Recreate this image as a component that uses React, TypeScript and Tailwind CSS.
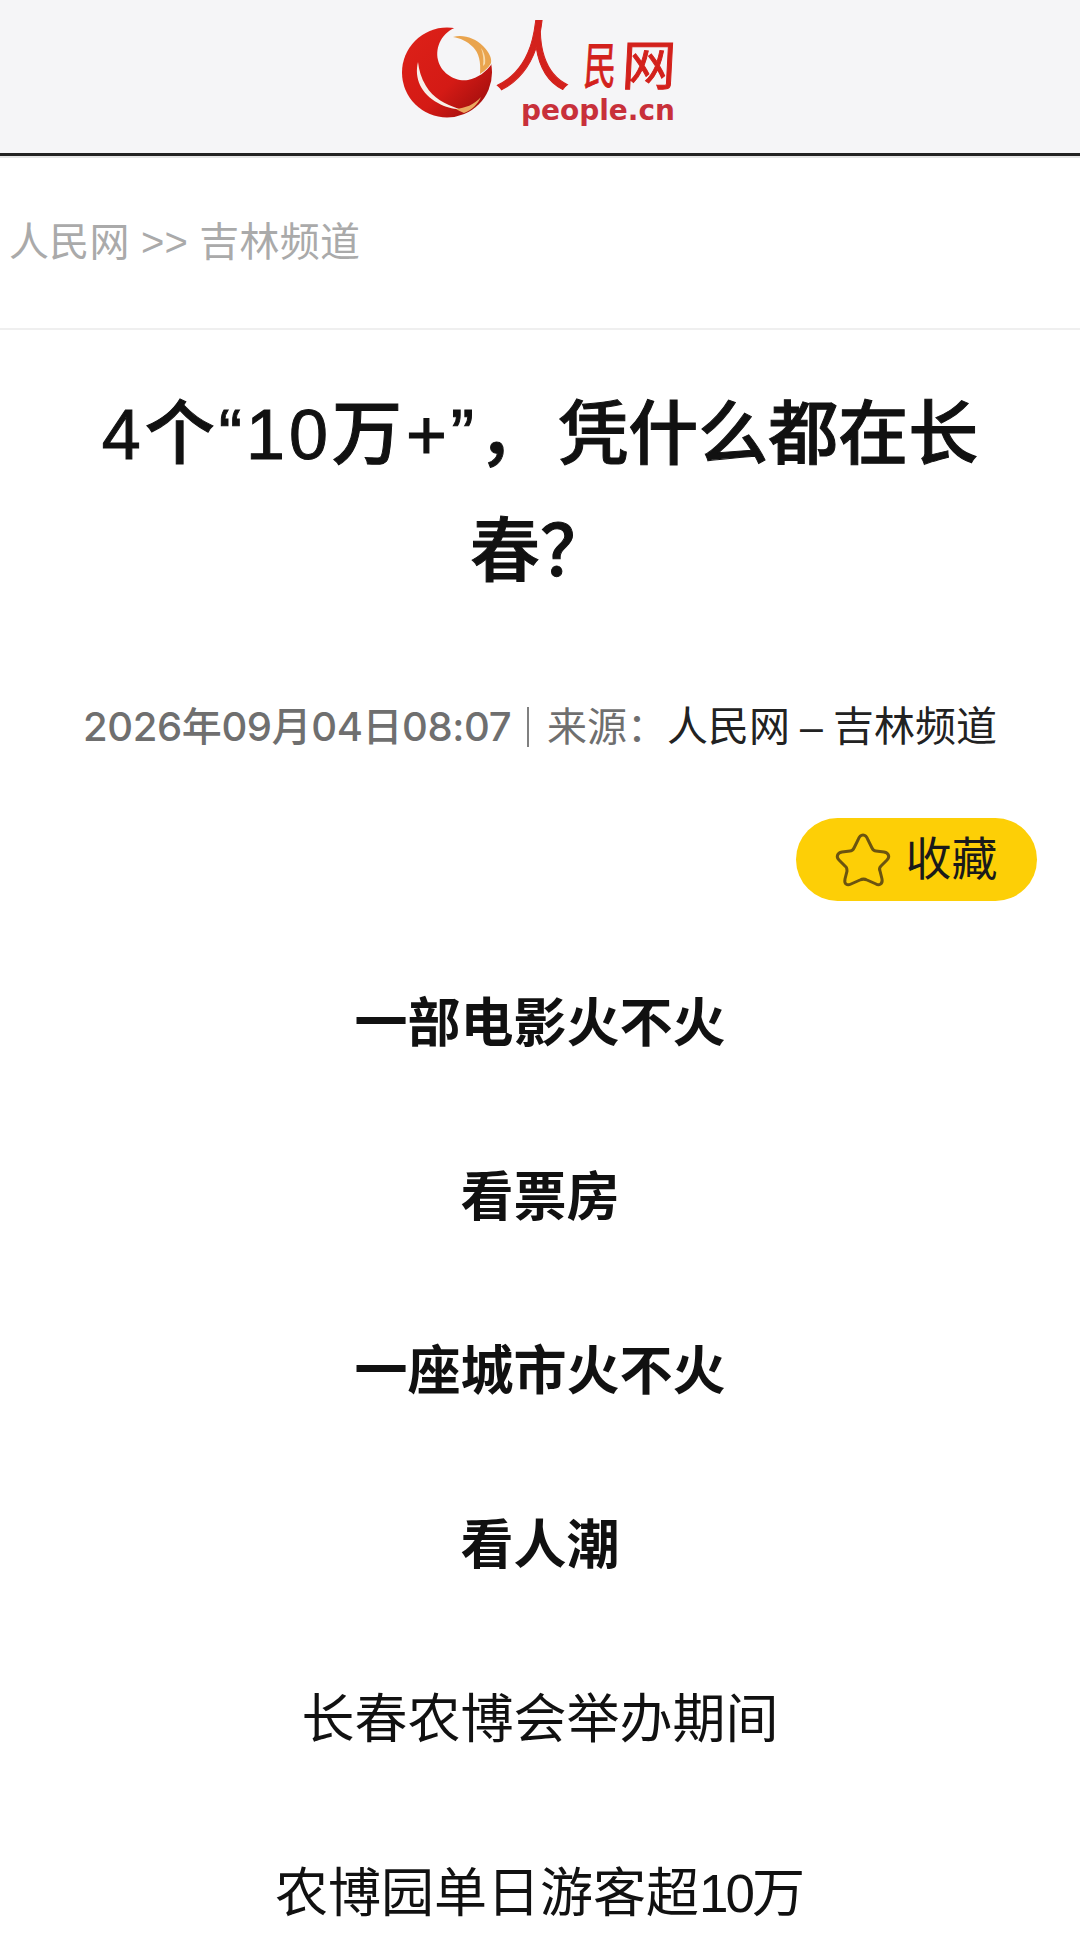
import React from 'react';

const cjk = { fontFamily: '"Liberation Sans", "Noto Sans CJK SC", sans-serif' };
const dateFont = { fontFamily: 'Inter, "Noto Sans CJK SC", sans-serif' };
const wordmark = { fontFamily: '"DejaVu Sans", sans-serif' };

const PeopleLogo = () => (
  <svg width="105" height="105" viewBox="0 0 105 105" className="shrink-0">
    <defs>
      <linearGradient id="red" x1="0.1" y1="0.1" x2="0.9" y2="0.9">
        <stop offset="0" stopColor="#dc2018" />
        <stop offset="0.6" stopColor="#d41a15" />
        <stop offset="1" stopColor="#a30f0e" />
      </linearGradient>
    </defs>
    <circle cx="52" cy="52.5" r="45" fill="url(#red)" />
    <path d="M62 7 C47 12 40 27 43 40 C46 53 60 62 73 60 C83 58 91 52 97.5 43 L105 43 L105 0 L62 0 Z" fill="#f5f5f7" />
    <path d="M58 17 C68 14 80 18 88 26 C94 32 97 38 96 43 C94 47 91 50 85 54 C86 42 84 33 78 27 C72 21 65 18 58 17Z" fill="#e9a44e" />
    <path d="M86 28 C89 32 91 38 90 44 L88 46 C89 40 88 33 86 28Z" fill="#f8dcae" />
    <path d="M23 42 C19 58 26 74 43 83 C50 87 58 89 64 89 C50 84 38 78 31 66 C26 58 24 50 23 42Z" fill="#f7efe8" />
    <path d="M61 89 C70 88 79 85 86 77 C83 84 77 90 69 93 C66 92 63 90 61 89Z" fill="#eaa860" />
  </svg>
);

const StarOutline = () => (
  <svg width="58" height="56" viewBox="0 0 58 56" className="shrink-0">
    <path
      d="M29 3 C32 3 33 5 34 8 L38 16 C39 18 40 19 42 19 L50 20 C55 21 56 25 53 28 L47 34 C46 35 45 37 46 39 L48 47 C49 52 45 54 42 52 L33 48 C31 47 28 47 26 48 L17 52 C13 54 10 52 11 47 L13 39 C13 37 13 35 11 34 L5 28 C2 25 3 21 8 20 L16 19 C18 19 19 18 20 16 L24 8 C25 5 26 3 29 3Z"
      fill="none"
      stroke="#6b5410"
      strokeWidth="3"
    />
  </svg>
);

const lines = [
  { text: '一部电影火不火', bold: true },
  { text: '看票房', bold: true },
  { text: '一座城市火不火', bold: true },
  { text: '看人潮', bold: true },
  { text: '长春农博会举办期间', bold: false },
];

export default function App() {
  return (
    <div className="h-[1955px] w-[1080px] overflow-hidden bg-white text-[#111]" style={cjk}>
      <header className="flex h-[156px] items-center justify-center border-b-[3px] border-[#222] bg-[#f5f5f7] pb-[9px]">
        <div className="flex items-center pr-[7px]">
          <PeopleLogo />
          <div className="flex w-[178px] flex-col items-end pr-[3px]">
            <div className="flex h-[77px] w-[178px] items-end text-[#d3211c] [-webkit-text-stroke:1px_#d3211c]">
              <span className="w-[87px] -skew-x-6 text-[76px] leading-[74px]">人</span>
              <span className="w-[38px] origin-left -skew-x-6 scale-x-[0.65] text-[50px] leading-[56px]">民</span>
              <span className="w-[53px] -skew-x-3 text-[54px] leading-[58px]">网</span>
            </div>
            <span className="text-[28px] leading-[32px] font-bold text-[#c8303a]" style={wordmark}>
              people.cn
            </span>
          </div>
        </div>
      </header>

      <div className="flex h-[174px] items-center border-t-2 border-b-2 border-t-[#e6e6e6] border-b-[#efefef] pb-[2px] pl-[9px] text-[40px] tracking-[0.2px] text-[#aaaaaa]">
        人民网 &gt;&gt; 吉林频道
      </div>

      <h1 className="mt-[47px] px-[90px] text-center text-[70px] leading-[117px] font-medium text-[#111] [-webkit-text-stroke:1px_#111]">
        <span className="tracking-[4px]">4个“10万+”，</span>
        <span className="ml-[6px]">凭什么都在长</span>
        春？
      </h1>

      <div className="mt-[88px] flex items-center justify-center text-[40px] leading-[56px] text-[#6f6f6f]">
        <span className="font-medium tracking-[-0.4px]" style={dateFont}>
          2026年09月04日08:07
        </span>
        <span className="mr-[18px] ml-[16px] h-[40px] w-[2px] bg-[#808080]" />
        <span>来源：</span>
        <span className="text-[41px] text-[#222]">
          人民网<span className="mx-[10px]">–</span>吉林频道
        </span>
      </div>

      <div className="mt-[63px] flex justify-end pr-[43px]">
        <button className="flex h-[83px] w-[241px] items-center justify-center gap-[14px] rounded-full bg-[#fdcf06] pr-[2px] text-[46px] text-[#1a1a1a]">
          <StarOutline />
          <span>收藏</span>
        </button>
      </div>

      <div className="mt-[95px] flex flex-col gap-[118px] text-center text-[53px] leading-[56px] text-[#111]">
        {lines.map((line) => (
          <p key={line.text} className={line.bold ? 'font-bold' : 'font-normal'}>
            {line.text}
          </p>
        ))}
        <p>
          农博园单日游客超<span className="tracking-[-3px]">10</span>万
        </p>
      </div>
    </div>
  );
}
